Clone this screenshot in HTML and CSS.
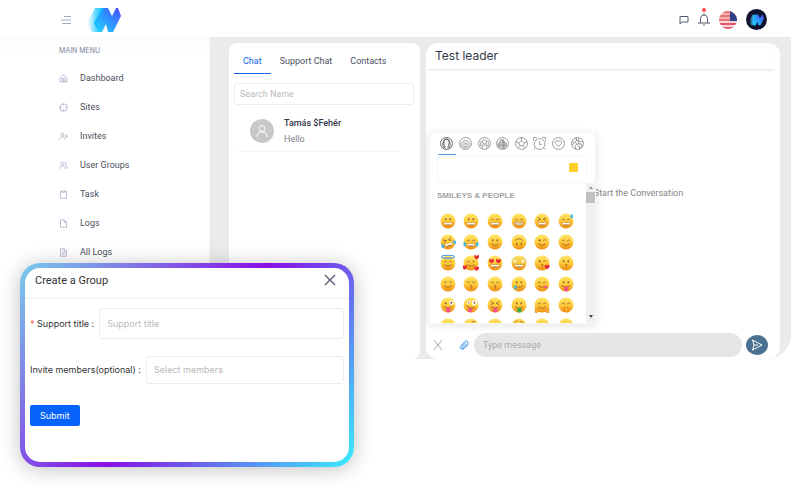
FILE: index.html
```html
<!DOCTYPE html>
<html lang="en">
<head>
<meta charset="utf-8">
<title>Chat</title>
<link rel="stylesheet" href="styles.css">
</head>
<body>
<svg class="defs" aria-hidden="true">
  <defs>
    <linearGradient id="face" x1="0" y1="0" x2="0" y2="1"><stop offset="0" stop-color="#ffe566"/><stop offset=".5" stop-color="#ffcd3c"/><stop offset="1" stop-color="#f08a12"/></linearGradient>
    <linearGradient id="brandDark" x1="0" y1="1" x2="1" y2="0"><stop offset="0" stop-color="#1fd8ff"/><stop offset=".5" stop-color="#2f93ff"/><stop offset="1" stop-color="#4a4dff"/></linearGradient>
    <linearGradient id="brandFade" x1="0" y1="0" x2="1" y2="0"><stop offset="0" stop-color="#5fdcff" stop-opacity="0"/><stop offset=".5" stop-color="#3ccfff" stop-opacity=".8"/><stop offset="1" stop-color="#08b4ff"/></linearGradient>
    <clipPath id="round"><circle cx="9" cy="9" r="9"/></clipPath>
    <symbol id="brand" viewBox="0 0 34 26">
      <path d="M0 16 8 1h9L9 16l5 9H5z" fill="url(#brandFade)"/>
      <path d="M7 16 15 1h5l-8 15 3 9h-3z" fill="#0cb9ff"/>
      <path d="M9 16 17 1h4l4 8 4-8h2l3 8-8 16h-5l-2-8-4 8h-3z" fill="url(#brandDark)"/>
    </symbol>
  </defs>
</svg>

<header class="topbar">
  <button class="icon-btn menu-btn" aria-label="Toggle menu">
    <svg viewBox="0 0 12 10" width="12" height="10"><path d="M4 1.500h7M1 5h10M2 8.500h9" /></svg>
  </button>
  <a class="logo" href="#" aria-label="Home"><svg width="34" height="26"><use href="#brand"/></svg></a>
  <div class="actions">
    <button class="icon-btn" aria-label="Messages"><svg viewBox="0 0 10 10" width="10" height="10"><path d="M1 9V1.500h8V7H3z"/></svg></button>
    <button class="icon-btn bell" aria-label="Notifications">
      <svg viewBox="0 0 12 13" width="12" height="13"><path d="M0 10h12M2.500 10V5.500a3.500 3.500 0 0 1 7 0V10M6 0v2M5 12h2"/></svg>
      <span class="dot"></span>
    </button>
    <button class="icon-btn" aria-label="Language">
      <svg class="flag" viewBox="0 0 18 18" width="18" height="18"><g clip-path="url(#round)"><path fill="#f7d5da" d="M0 0h18v18H0z"/><path fill="#e2566b" d="M0 0h18v2H0zM0 4h18v2H0zM0 8h18v2H0zM0 12h18v2H0zM0 16h18v2H0z"/><path fill="#ef8f84" opacity=".5" d="M0 0h11v10H0z"/><path fill="#303f8c" d="M11 0h7v10h-7z"/></g></svg>
    </button>
    <button class="icon-btn profile" aria-label="Profile"><svg width="15" height="12"><use href="#brand"/></svg></button>
  </div>
</header>

<div class="shell">
  <nav class="sidebar" aria-label="Main menu">
    <h2>MAIN MENU</h2>
    <ul>
      <li><a href="#"><svg viewBox="0 0 24 24"><path d="M3 10l9-7 9 7v11H3zM8 21v-9h8v9M12 14v7"/></svg>Dashboard</a></li>
      <li><a href="#"><svg viewBox="0 0 24 24"><circle cx="12" cy="12" r="10"/><path d="M12 2v5M12 17v5M2 12h5M17 12h5"/></svg>Sites</a></li>
      <li><a href="#"><svg viewBox="0 0 24 24"><circle cx="9" cy="7" r="4"/><path d="M1 21c0-5 3-8 8-8s8 3 8 8M20 7v8M16 11h8"/></svg>Invites</a></li>
      <li><a href="#"><svg viewBox="0 0 24 24"><circle cx="9" cy="7" r="4"/><path d="M1 21c0-5 3-8 8-8s8 3 8 8M15 3c5 0 5 8 1 8M18 13c3 1 5 4 5 8"/></svg>User Groups</a></li>
      <li><a href="#"><svg viewBox="0 0 24 24"><path d="M8 4H4v18h16V4h-4M8 2h8v4H8z"/></svg>Task</a></li>
      <li><a href="#"><svg viewBox="0 0 24 24"><path d="M4 2h10l6 6v14H4zM14 2v7h6"/></svg>Logs</a></li>
      <li><a href="#"><svg viewBox="0 0 24 24"><path d="M4 2h10l6 6v14H4zM14 2v7h6M8 13h8M8 17h8M8 9h3"/></svg>All Logs</a></li>
    </ul>
  </nav>

  <main class="workspace">
    <section class="panel contacts">
      <div class="tabs" role="tablist">
        <button role="tab" aria-selected="true">Chat</button>
        <button role="tab" aria-selected="false">Support Chat</button>
        <button role="tab" aria-selected="false">Contacts</button>
      </div>
      <input class="search" type="search" placeholder="Search Name" aria-label="Search Name">
      <a class="person" href="#">
        <span class="avatar"><svg viewBox="0 0 14 14" width="14" height="14"><circle cx="7" cy="4.500" r="3"/><path d="M2 13c0-7 10-7 10 0"/></svg></span>
        <span class="who"><strong>Tamás $Fehér</strong><span>Hello</span></span>
      </a>
    </section>

    <section class="panel conversation">
      <h1>Test leader</h1>
      <div class="messages"><p>Start the Conversation</p></div>
      <form class="composer">
        <button type="button" class="icon-btn close-x" aria-label="Cancel"><svg viewBox="0 0 10 10" width="10" height="10"><path d="M1 0l8 10M9 0L1 10"/></svg></button>
        <button type="button" class="icon-btn clip" aria-label="Attach file"><svg viewBox="0 0 10 10" width="10" height="10"><path d="M9 4.500 5 8.500C3 10.500 0 8 2 6l4-4.500c1.500-1.500 4 .5 2.500 2.200L5 7.500C4 8.500 2.500 7.500 3.500 6.300L6.500 3"/></svg></button>
        <input type="text" placeholder="Type message" aria-label="Type message">
        <button class="send" aria-label="Send"><svg viewBox="0 0 12 12" width="12" height="12"><path d="M1.500 1 11 6l-9.500 5L3 6zM3 6h4"/></svg></button>
      </form>

      <div class="picker">
        <div class="categories">
          <button class="active" aria-label="Smileys and people"><svg viewBox="0 0 24 24"><circle cx="12" cy="12" r="11"/><path d="M9 21v-4C6 13 6 4 12 4s6 9 3 13v4M7 20c-3-5-2-16 5-16s8 11 5 16"/></svg></button>
          <button aria-label="Animals and nature"><svg viewBox="0 0 24 24"><circle cx="12" cy="12" r="11"/><path d="M2 13h20M4 17h16M5 11c2-6 12-6 14 0M9 7h1M14 7h1M8 20h8M10 11h4"/></svg></button>
          <button aria-label="Food and drink"><svg viewBox="0 0 24 24"><circle cx="12" cy="12" r="11"/><circle cx="12" cy="9" r="4"/><path d="M3 18c3-4 6-3 9-3s6-1 9 3M6 7l-2 8M18 7l2 8M8 16v5M16 16v5"/></svg></button>
          <button aria-label="Activity"><svg viewBox="0 0 24 24"><circle cx="12" cy="12" r="11"/><path d="M6 21V10h3V5h3v17M12 8h4v14M16 11h3v9M4 10v9M9 10v12M14 4v18M6 7h3M3 15h17"/></svg></button>
          <button aria-label="Travel and places"><svg viewBox="0 0 24 24"><circle cx="12" cy="12" r="11"/><path d="M12 7l5 4-2 5H9l-2-5zM12 7V1M17 11l5-2M15 16l4 4M9 16l-4 4M7 11L2 9"/></svg></button>
          <button aria-label="Objects"><svg viewBox="0 0 24 24"><circle cx="12" cy="13" r="10"/><path d="M12 8v6h4M1 7V1h6M23 7V1h-6M4 20l-2 3M20 20l2 3"/></svg></button>
          <button aria-label="Symbols"><svg viewBox="0 0 24 24"><circle cx="12" cy="12" r="11"/><path d="M12 18 7 12c-3-4 3-8 5-3 2-5 8-1 5 3z"/></svg></button>
          <button aria-label="Flags"><svg viewBox="0 0 24 24"><circle cx="12" cy="12" r="11"/><path d="M8 2l3 4-4 3 4 4-3 3v6M15 2l-2 5 5 2 4-1M13 12l6 1 1 4-4 5-1-6-3-2zM3 7l3 5-4 2M10 2v4l4 2v4"/></svg></button>
        </div>
        <div class="emoji-search"><input type="text" aria-label="Search emoji"><button class="tone" aria-label="Skin tone"></button></div>
        <div class="emoji-body">
          <div class="emoji-list"><h3>SMILEYS &amp; PEOPLE</h3><div class="emoji-grid" id="emojis"></div></div>
          <div class="scrollbar" aria-hidden="true"><i class="up"></i><i class="thumb"></i><i class="down"></i></div>
        </div>
      </div>
    </section>
  </main>
</div>

<div class="modal" role="dialog" aria-labelledby="modal-title">
  <div class="modal-head">
    <h2 id="modal-title">Create a Group</h2>
    <button class="icon-btn" aria-label="Close"><svg viewBox="0 0 12 12" width="12" height="12"><path d="M1 1l10 10M11 1L1 11"/></svg></button>
  </div>
  <form class="modal-form">
    <div class="field"><label for="title"><b>*</b> Support title :</label><input id="title" type="text" placeholder="Support title"></div>
    <div class="field members"><label for="members">Invite members(optional) :</label><select id="members"><option>Select members</option></select></div>
    <button class="submit" type="button">Submit</button>
  </form>
</div>
<script src="emojis.js"></script>
</body>
</html>
```
FILE: styles.css
```css
* { box-sizing: border-box; }
body { margin: 0; min-height: 100vh; position: relative; background: #fff; color: #4b5060; font: 9px/12px Roboto, "Liberation Sans", sans-serif; overflow-x: hidden; }
button, input, select { font: inherit; color: inherit; margin: 0; min-width: 0; }
button { border: 0; padding: 0; background: none; }
h1, h2, h3, p, ul { margin: 0; padding: 0; }
ul { list-style: none; }
a { color: inherit; text-decoration: none; }
svg { display: block; fill: none; }
.defs { position: absolute; width: 0; height: 0; }

.topbar { display: flex; align-items: center; height: 37px; padding: 2px 24px 0 60px; }
.icon-btn { display: block; }
.icon-btn svg { stroke: #555c75; }
.menu-btn svg { stroke: #a4aac2; }
.logo { margin-left: 15px; }
.actions { display: flex; align-items: center; gap: 9px; margin-left: auto; }
.bell { position: relative; }
.dot { position: absolute; top: -5px; left: 4px; width: 4px; height: 4px; border-radius: 50%; background: #ff4747; }
.actions .flag, .profile svg { stroke: none; }
.profile { display: grid; place-items: center; width: 21px; height: 21px; border-radius: 50%; background: #10122e; }

.shell { display: flex; min-height: 322px; border-radius: 0 0 24px 0; overflow: hidden; background: #ebebeb; }
.sidebar { flex: none; width: 210px; padding: 8px 0 0 59px; background: linear-gradient(#fcfcfc, #fff 16px); border-right: 1px solid #f4f4f4; }
.sidebar h2 { font-family: Inter, sans-serif; font-size: 7px; line-height: 12px; font-weight: 400; color: #7d839c; }
.sidebar li { height: 29px; }
.sidebar ul { padding-top: 7px; }
.sidebar a { display: flex; align-items: center; gap: 12px; height: 28px; }
.sidebar svg { width: 9px; height: 9px; stroke: #a3a9c6; stroke-width: 2; }

.workspace { flex: 1; display: grid; grid-template-columns: 191px minmax(0, 1fr); gap: 6px; padding: 6px 11px 0 19px; }
.panel { background: #fff; border-radius: 8px; }
.contacts { padding: 5px 6px 5px 5px; }
.tabs { display: flex; }
.tabs button { height: 26px; padding: 0 9px; border-bottom: 1px solid transparent; }
.tabs button[aria-selected="true"] { color: #1565e6; border-color: #1565e6; }
.search { display: block; width: 100%; height: 22px; margin-top: 9px; padding: 0 5px; border: 1px solid #ececec; border-radius: 3px; background: #fff; appearance: none; outline: 0; }
::placeholder { color: #b9b9bd; opacity: 1; }
.person { display: flex; align-items: center; gap: 10px; margin: 0 13px 0 2px; padding: 12px 0 6px 14px; border-bottom: 1px solid #f6f6f6; }
.avatar { display: grid; place-items: center; width: 24px; height: 24px; border-radius: 50%; background: #c8c8c8; }
.avatar svg { stroke: #fff; }
.who { display: flex; flex-direction: column; gap: 4px; color: #7a7f8c; }
.who strong { font-weight: 500; color: #31394b; }

.conversation { position: relative; display: flex; flex-direction: column; border-radius: 12px; }
.conversation h1 { margin: 0 5px 0 2px; padding: 4px 7px; font: 400 12px/18px Inter, sans-serif; color: #31394b; box-shadow: 0 2px 2px -1px #ddd; }
.messages { flex: 1; display: grid; place-items: center; padding: 0 0 16px 71px; color: #858585; }
.composer { display: flex; align-items: center; padding: 0 12px 2px 7px; }
.composer .close-x svg { stroke: #aaa; }
.clip { margin: 0 5px 0 16px; }
.composer .clip svg { stroke: #2f8fe8; }
.composer input { flex: 1; height: 24px; padding: 0 9px; border: 0; border-radius: 12px; background: #e6e6e6; outline: 0; }
.composer input::placeholder { color: #aaa; }
.send { display: grid; place-items: center; width: 22px; height: 20px; margin-left: 4px; border-radius: 50%; background: #4b7292; }
.send svg { stroke: #fff; }

.picker { position: absolute; left: 3px; bottom: 35px; width: 167px; height: 192px; display: flex; flex-direction: column; background: #fff; border: 1px solid #f6f6f6; border-radius: 3px; box-shadow: 0 2px 8px rgba(0, 0, 0, .1); overflow: hidden; }
.categories { display: flex; gap: 1px; padding: 0 9px 0 8px; }
.categories button { display: grid; place-items: center; flex: 1; height: 22px; border-bottom: 1px solid transparent; }
.categories .active { border-color: #4f98e2; }
.categories svg { width: 13px; height: 13px; stroke: #8a8a8a; stroke-width: 1.500; }
.categories .active svg { stroke: #444; }
.emoji-search { display: flex; align-items: center; flex: none; height: 27px; margin: 1px 8px 0 7px; padding-right: 8px; border: 1px solid #f7f7f7; border-radius: 3px; transform: none; }
.emoji-search input { flex: 1; height: 20px; border: 0; background: none; outline: 0; }
.tone { width: 9px; height: 9px; margin-bottom: 4px; border-radius: 1px; background: #ffcf26; }
.emoji-body { display: flex; flex: 1; min-height: 0; }
.emoji-list { flex: 1; overflow: hidden; padding: 7px 8px 0 6px; }
.emoji-list h3 { margin-left: 1px; font: 700 8px/12px "Liberation Sans", sans-serif; color: #a3a3a3; white-space: nowrap; }
.emoji-grid { display: grid; grid-template-columns: repeat(6, 1fr); grid-auto-rows: 21px; padding-top: 8px; }
.emoji-grid button { display: grid; place-items: center; }
.emoji-grid svg { width: 16px; height: 16px; }
.scrollbar { width: 9px; display: flex; flex-direction: column; align-items: center; background: #f1f1f1; }
.scrollbar .up { margin: 3px 0; border: 2px solid transparent; border-top: 0; border-bottom: 3px solid #999; }
.scrollbar .thumb { width: 9px; height: 11px; background: #c1c1c1; }
.scrollbar .down { margin: auto 0 5px; border: 2px solid transparent; border-bottom: 0; border-top: 3px solid #444; }

.modal { position: absolute; left: 20px; top: 263px; width: 334px; min-height: 204px; border: 5px solid transparent; border-radius: 20px; background: linear-gradient(#fff, #fff) padding-box, linear-gradient(129deg, #79cdea, #8810e4 50%, #38eeff) border-box; box-shadow: 0 2px 20px rgba(0, 0, 0, .25); color: #333; font-family: Inter, sans-serif; }
.modal-head { display: flex; justify-content: space-between; align-items: center; height: 31px; padding: 0 13px 6px 10px; border-bottom: 1px solid #f1f1f1; }
.modal-head h2 { padding-top: 2px; font: 400 11px/16px Roboto, sans-serif; }
.modal-head svg { stroke-width: 1.400; }
.modal-form { padding: 9px 5px 36px; }
.field { display: flex; align-items: center; gap: 5px; margin-bottom: 17px; }
.field b { font-weight: 400; color: #ff4d4f; }
.field input, .field select { flex: 1; height: 31px; padding: 0 7px; border: 1px solid #ececec; border-radius: 3px; background: #fff; appearance: none; outline: 0; }
.field select { height: 28px; color: #b9b9bd; }
.members { margin-bottom: 21px; }
.submit { display: block; height: 21px; padding: 0 10px; border-radius: 2px; background: #0563fa; color: #fff; }
```
FILE: emojis.js
```js
// Each face is a pair of eyes, a mouth and optional extras on a 28-unit canvas.
const ink = "#a0622a";
const line = d => `<path d="${d}" stroke="${ink}" stroke-width="1.500" stroke-linecap="round"/>`;
const heart = (x, y, s) => `<path transform="translate(${x} ${y}) scale(${s})" d="M0 4C-8-1-3-7 0-2 3-7 8-1 0 4z" fill="#e92a36"/>`;
const star = x => `<path transform="translate(${x} 10)" d="M0-6 2-2 6-1 3 2 4 6 0 4-4 6-3 2-6-1-2-2z" fill="#fff0a0" stroke="#d28c14" stroke-width=".7"/>`;
const tongue = '<path d="M11 19h7v5c0 4-7 4-7 0z" fill="#f3508c"/>';
const tear = (x, y) => `<path d="M${x} ${y}c-5 7 5 7 0 0z" stroke="#36b5ea" stroke-width="2" fill="#6dd1f6"/>`;

const eyes = {
  oval: `<ellipse cx="10" cy="11" rx="1.300" ry="2.200" fill="${ink}"/><ellipse cx="18" cy="11" rx="1.300" ry="2.200" fill="${ink}"/>`,
  happy: line("M7 12q2.500-4 5 0M16 12q2.500-4 5 0"),
  shut: line("M7 10q2.500 4 5 0M16 10q2.500 4 5 0"),
  squint: line("M7 8l5 3-5 2M21 8l-5 3 5 2"),
  wink: line("M16 11q3-3 5 0") + `<circle cx="10" cy="11" r="2" fill="${ink}"/>`,
  hearts: heart(8, 11, 1) + heart(20, 11, 1),
  stars: star(7) + star(21),
  wild: `<circle cx="9" cy="11" r="3" fill="#fff"/><circle cx="19" cy="9" r="4.500" fill="#fff"/><circle cx="9" cy="11" r="1.300" fill="${ink}"/><circle cx="19" cy="9" r="1.800" fill="${ink}"/>`
};
const mouths = {
  grin: `<path d="M6 16q8 2 16 0c-1 8-15 8-16 0z" fill="${ink}"/><path d="M7 16.500q7 2 14 0l-1 3.500H8z" fill="#fff"/>`,
  teeth: '<path d="M6 16h16c-1 8-15 8-16 0z" fill="#fff" stroke="#a76422"/><path d="M7 19h14M11 16v6M14 16v6M17 16v6" stroke="#c7a070"/>',
  smile: line("M8 17q6 6 12 0"),
  kiss: line("M13 16q5 1 1 3 4 1 0 3"),
  flat: line("M10 19h8"),
  tongue: line("M7 17q7 5 14 0") + tongue
};
const halo = '<ellipse cx="14" cy="3" rx="11" ry="2.500" stroke="#4590e0" stroke-width="2"/>';
const tears = tear(3, 15) + tear(25, 15);
const faces = [
  ["oval", "grin"], ["oval", "grin"], ["happy", "grin"], ["happy", "teeth"], ["squint", "grin"], ["happy", "grin", tear(24, 3)],
  ["squint", "grin", tears, -18], ["happy", "grin", tears], ["oval", "smile"], ["oval", "smile", "", 180], ["wink", "smile"], ["happy", "smile"],
  ["happy", "smile", halo], ["happy", "smile", heart(24, 4, 1) + heart(3, 22, 1) + heart(24, 24, 1)], ["hearts", "grin"], ["stars", "grin"], ["wink", "kiss", heart(23, 21, 1)], ["oval", "kiss"],
  ["shut", "smile"], ["shut", "kiss"], ["happy", "kiss"], ["oval", "smile", tear(8, 17)], ["happy", "smile", '<path d="M17 19l5-2c4 4-1 8-5 2z" fill="#f3508c"/>'], ["oval", "tongue"],
  ["wink", "tongue", '<circle cx="20" cy="10" r="4" fill="#fff"/><circle cx="20" cy="10" r="1.600" fill="#71390d"/>'], ["wild", "tongue", "", 12], ["squint", "tongue"], ["oval", "smile", '<path d="M11 19h7v8h-7z" fill="#36ae47"/>'], ["happy", "smile", '<path d="M2 21q4-3 6 2l-2 4H2zM26 21q-4-3-6 2l2 4h4z" fill="#ffb32e" stroke="#d77b12"/>'], ["happy", "flat", '<path d="M12 18q3-3 5 0l1 8h-6z" fill="#ffb32e" stroke="#d77b12"/>'],
  ["oval", "flat"], ["oval", "flat", line("M16 7l5-1")], ["oval", "flat"], ["oval", "flat", line("M7 7l4-2M16 6l5 2")], ["oval", "flat"], ["oval", "flat"]
];

document.getElementById("emojis").innerHTML = faces.map(([eye, mouth, extra = "", turn = 0], i) =>
  `<button aria-label="Emoji ${i + 1}"><svg viewBox="0 0 28 28"><circle cx="14" cy="14" r="13" fill="url(#face)"/><g transform="rotate(${turn} 14 14)">${eyes[eye]}${mouths[mouth]}${extra}</g></svg></button>`
).join("");
```
